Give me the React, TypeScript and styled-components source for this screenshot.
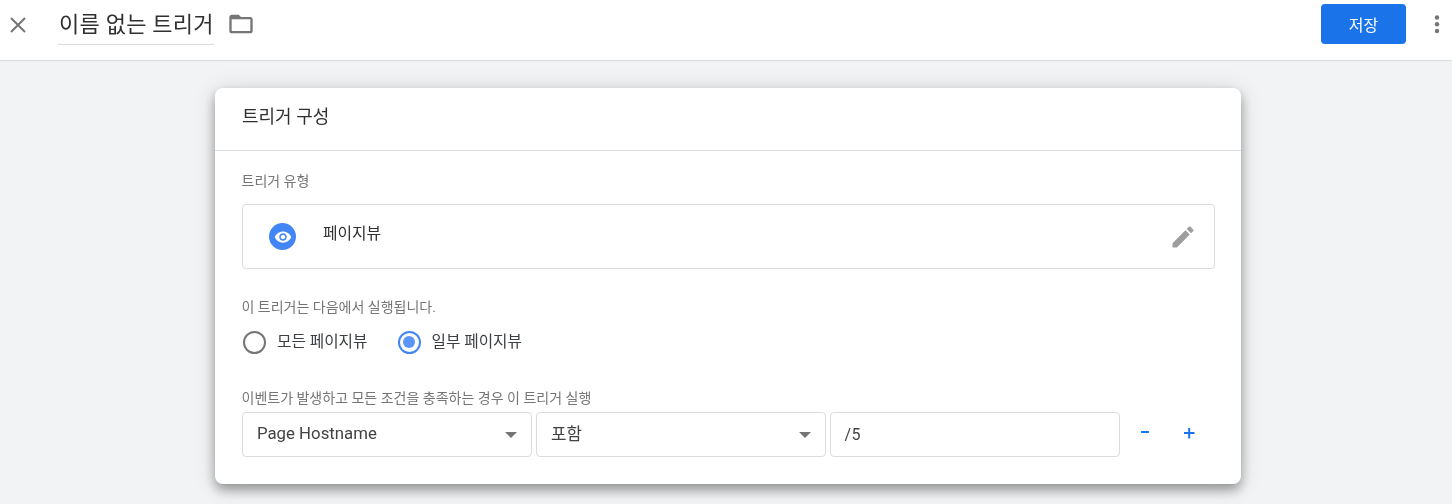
import React from "react";
import styled, { createGlobalStyle } from "styled-components";

const Global = createGlobalStyle`
  html, body { margin: 0; padding: 0; height: 100%; overflow: hidden; }
  body { background: #f1f3f4; font-family: Roboto, "Noto Sans CJK KR", sans-serif; }
  #root { height: 504px; overflow: hidden; will-change: transform; }
`;

const Toolbar = styled.header`
  height: 60px;
  background: #fff;
  border-bottom: 1px solid #dadce0;
  display: flex;
  align-items: flex-start;
`;
const CloseBtn = styled.button`
  border: 0; background: none; padding: 0;
  width: 18px; height: 18px;
  margin: 16px 0 0 9px;
  display: flex;
  color: #757575;
`;
const TitleBox = styled.div`
  margin-left: 31px;
  width: 156px;
  height: 45px;
  box-sizing: border-box;
  border-bottom: 1px solid #dadce0;
  font-size: 22px;
  line-height: 24px;
  padding: 13px 0 0 1px;
  color: #303030;
  white-space: nowrap;
  letter-spacing: 0.25px;
`;
const FolderBtn = styled.button`
  border: 0; background: none; padding: 0;
  margin: 10px 0 0 13px;
  width: 28px; height: 28px;
  color: #757575;
  display: flex;
`;
const Spacer = styled.div`flex: 1;`;
const SaveBtn = styled.button`
  margin-top: 4px;
  width: 85px;
  height: 40px;
  border: 0;
  border-radius: 4px;
  background: #1a73e8;
  color: #fff;
  font: inherit;
  font-size: 16px;
`;
const MoreBtn = styled.button`
  border: 0; background: none; padding: 0;
  margin: 12px 3px 0 19px;
  width: 24px; height: 24px;
  color: #757575;
  display: flex;
`;

const Main = styled.main`
  display: flex;
  padding: 27px 0 0 215px;
`;
const Card = styled.section`
  width: 1026px;
  height: 396px;
  box-sizing: border-box;
  background: #fff;
  border-radius: 8px;
  box-shadow: 0 6px 12px rgba(0,0,0,.35), 0 2px 24px rgba(0,0,0,.12);
`;
const CardHead = styled.h2`
  margin: 0;
  height: 63px;
  box-sizing: border-box;
  border-bottom: 1px solid #dadce0;
  padding: 17px 27px 0;
  font-size: 18px;
  line-height: 24px;
  font-weight: 400;
  color: #303030;
`;
const CardBody = styled.div`
  padding: 21px 26.5px 0 26.5px;
`;
const Label = styled.div`
  font-size: 14px;
  line-height: 18px;
  color: #757575;
`;
const TypeBox = styled.div`
  margin-top: 14px;
  height: 65px;
  box-sizing: border-box;
  border: 1px solid #dadce0;
  border-radius: 4px;
  display: flex;
  align-items: center;
  padding: 0 17px 0 26.5px;
`;
const TypeIcon = styled.span`
  width: 27px; height: 27px;
  border-radius: 50%;
  background: #4285f4;
  display: flex;
  align-items: center;
  justify-content: center;
`;
const TypeName = styled.span`
  margin: -8px 0 0 27px;
  flex: 1;
  font-size: 15.8px;
  color: #303030;
`;
const PencilIcon = styled.span`
  display: flex;
  color: #9e9e9e;
`;
const RunsLabel = styled(Label)`
  margin-top: 29px;
`;
const RadioRow = styled.div`
  margin: 13px 0 0 1.5px;
  display: flex;
  align-items: center;
  height: 26px;
`;
const RadioItem = styled.label`
  display: flex;
  align-items: center;
  margin-right: 30px;
  font-size: 15.7px;
  color: #3c4043;
`;
const RadioText = styled.span`
  margin-top: -4px;
`;
const RadioMark = styled.span<{ $on?: boolean }>`
  width: 23px; height: 23px;
  box-sizing: border-box;
  border-radius: 50%;
  border: 2px solid ${p => (p.$on ? "#4285f4" : "#757575")};
  margin-right: 11px;
  display: flex;
  align-items: center;
  justify-content: center;
  &::after {
    content: "";
    display: ${p => (p.$on ? "block" : "none")};
    width: 12px; height: 12px;
    border-radius: 50%;
    background: #5b95f5;
  }
`;
const CondLabel = styled(Label)`
  margin-top: 34px;
`;
const CondRow = styled.div`
  margin-top: 5px;
  display: flex;
  gap: 4px;
  align-items: flex-start;
`;
const Select = styled.div`
  width: 290px;
  height: 45px;
  box-sizing: border-box;
  border: 1px solid #dadce0;
  border-radius: 4px;
  display: flex;
  align-items: center;
  justify-content: space-between;
  padding: 0 14px 4px 14.5px;
  font-size: 16.8px;
  color: #424242;
  &::after {
    content: "";
    margin-top: 4px;
    border-left: 6px solid transparent;
    border-right: 6px solid transparent;
    border-top: 6px solid #757575;
  }
`;
const ValueInput = styled.div`
  width: 290px;
  height: 45px;
  box-sizing: border-box;
  border: 1px solid #dadce0;
  border-radius: 4px;
  display: flex;
  align-items: center;
  padding: 0 14px;
  font-size: 16px;
  letter-spacing: 0.4px;
  color: #424242;
`;
const RowButtons = styled.div`
  margin: 11px 0 0 14px;
  display: flex;
  gap: 27px;
  height: 20px;
  align-items: center;
  color: #1a73e8;
`;
const RowBtn = styled.button`
  border: 0; background: none; padding: 0;
  width: 16px; height: 16px;
  display: flex;
  color: #1a73e8;
`;

export default function App() {
  return (
    <>
      <Global />
      <Toolbar>
        <CloseBtn aria-label="close">
          <svg width="18" height="18" viewBox="0 0 18 18"><path d="M2 2 L16 16 M16 2 L2 16" stroke="currentColor" strokeWidth="2" /></svg>
        </CloseBtn>
        <TitleBox>이름 없는 트리거</TitleBox>
        <FolderBtn aria-label="folder">
          <svg width="28" height="28" viewBox="0 0 24 24" fill="currentColor"><path d="M20 6h-8l-2-2H4c-1.1 0-2 .9-2 2v12c0 1.1.9 2 2 2h16c1.1 0 2-.9 2-2V8c0-1.1-.9-2-2-2zm0 12H4V8h16v10z" /></svg>
        </FolderBtn>
        <Spacer />
        <SaveBtn>저장</SaveBtn>
        <MoreBtn aria-label="more">
          <svg width="24" height="24" viewBox="0 0 24 24" fill="currentColor"><circle cx="12" cy="5.500" r="2.2" /><circle cx="12" cy="12.300" r="2.2" /><circle cx="12" cy="19" r="2.2" /></svg>
        </MoreBtn>
      </Toolbar>
      <Main>
        <Card>
          <CardHead>트리거 구성</CardHead>
          <CardBody>
            <Label>트리거 유형</Label>
            <TypeBox>
              <TypeIcon>
                <svg width="18" height="18" viewBox="0 0 24 24" fill="#fff"><path d="M12 4.5C7 4.5 2.73 7.61 1 12c1.73 4.39 6 7.5 11 7.5s9.27-3.11 11-7.5c-1.73-4.39-6-7.5-11-7.5zM12 17c-2.76 0-5-2.24-5-5s2.24-5 5-5 5 2.24 5 5-2.24 5-5 5zm0-8c-1.66 0-3 1.34-3 3s1.34 3 3 3 3-1.34 3-3-1.34-3-3-3z" /></svg>
              </TypeIcon>
              <TypeName>페이지뷰</TypeName>
              <PencilIcon>
                <svg width="28" height="28" viewBox="0 0 24 24" fill="currentColor"><path d="M3 17.25V21h3.75L17.81 9.94l-3.75-3.75L3 17.25zM20.71 7.04c.39-.39.39-1.02 0-1.41l-2.34-2.34c-.39-.39-1.02-.39-1.41 0l-1.83 1.83 3.75 3.75 1.83-1.83z" /></svg>
              </PencilIcon>
            </TypeBox>
            <RunsLabel>이 트리거는 다음에서 실행됩니다.</RunsLabel>
            <RadioRow>
              <RadioItem><RadioMark /><RadioText>모든 페이지뷰</RadioText></RadioItem>
              <RadioItem><RadioMark $on /><RadioText>일부 페이지뷰</RadioText></RadioItem>
            </RadioRow>
            <CondLabel>이벤트가 발생하고 모든 조건을 충족하는 경우 이 트리거 실행</CondLabel>
            <CondRow>
              <Select>Page Hostname</Select>
              <Select>포함</Select>
              <ValueInput>/5</ValueInput>
              <RowButtons>
                <RowBtn aria-label="remove">
                  <svg width="16" height="16" viewBox="0 0 16 16"><rect x="3" y="6" width="8" height="2" fill="currentColor" /></svg>
                </RowBtn>
                <RowBtn aria-label="add">
                  <svg width="16" height="16" viewBox="0 0 16 16"><path d="M3 8h10.5M8.2 3v10.500" stroke="currentColor" strokeWidth="2" /></svg>
                </RowBtn>
              </RowButtons>
            </CondRow>
          </CardBody>
        </Card>
      </Main>
    </>
  );
}
